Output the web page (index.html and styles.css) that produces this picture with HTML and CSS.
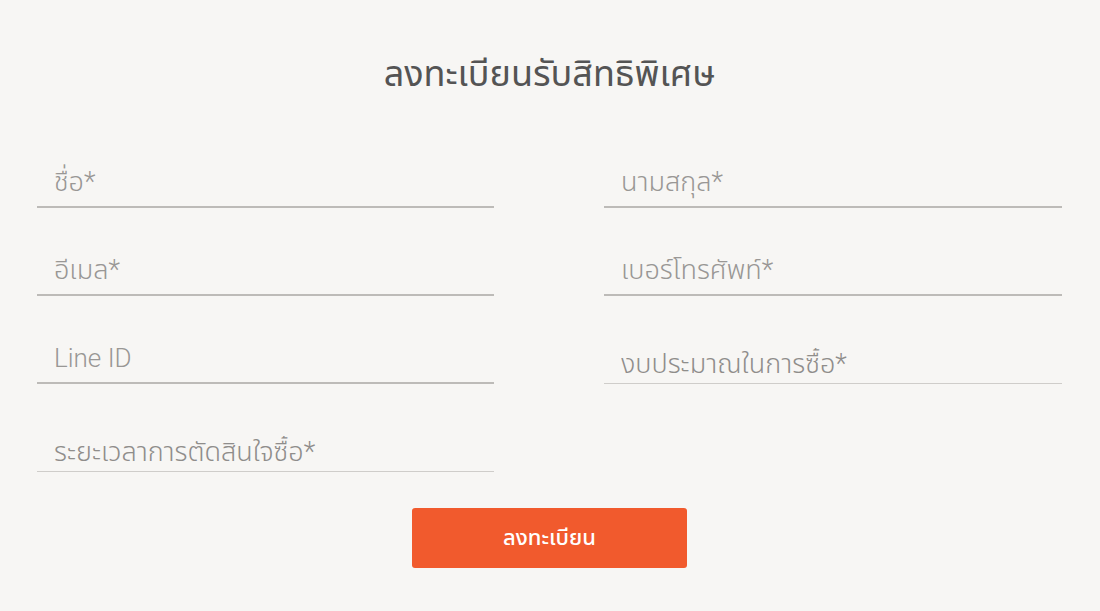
FILE: index.html
```html
<!DOCTYPE html>
<html lang="th">
<head>
<meta charset="utf-8">
<title>ลงทะเบียนรับสิทธิพิเศษ</title>
<link rel="stylesheet" href="styles.css">
</head>
<body>
<main class="page">
  <h1 class="title">ลงทะเบียนรับสิทธิพิเศษ</h1>
  <form class="form">
    <div class="grid">
      <div class="field"><input class="input" type="text" placeholder="ชื่อ*"></div>
      <div class="field"><input class="input" type="text" placeholder="นามสกุล*"></div>
      <div class="field"><input class="input" type="email" placeholder="อีเมล*"></div>
      <div class="field"><input class="input" type="tel" placeholder="เบอร์โทรศัพท์*"></div>
      <div class="field"><input class="input input-latin" type="text" placeholder="Line ID"></div>
      <div class="field"><select class="select"><option>งบประมาณในการซื้อ*</option></select></div>
      <div class="field"><select class="select"><option>ระยะเวลาการตัดสินใจซื้อ*</option></select></div>
    </div>
    <div class="actions">
      <button class="button" type="button">ลงทะเบียน</button>
    </div>
  </form>
</main>
</body>
</html>
```
FILE: styles.css
```css
* { box-sizing: border-box; }
html, body { margin: 0; padding: 0; }
body {
  background: #f7f6f4;
  font-family: "Noto Sans Thai", "Noto Sans", sans-serif;
  color: #555;
  width: 1100px;
  height: 611px;
  overflow: hidden;
}
.page {
  padding: 50px 38px 0 37px;
}
.title {
  margin: 0;
  text-align: center;
  font-weight: 400;
  font-size: 36px;
  line-height: 50px;
  color: #545454;
}
.form { margin-top: 48px; }
.grid {
  display: grid;
  grid-template-columns: 457px 458px;
  column-gap: 110px;
  row-gap: 28px;
}
.field { height: 60px; }
.input, .select {
  width: 100%;
  height: 60px;
  border: 0;
  background: transparent;
  font-family: Roboto, "Noto Sans Thai", sans-serif;
  font-size: 27px;
  font-weight: 300;
  color: #8f8d8b;
  padding: 0 0 0 17px;
  outline: none;
  border-radius: 0;
}
.input {
  border-bottom: 2px solid #bdbbb8;
  padding-top: 10px;
}
.input-latin { font-size: 26px; }
.input::placeholder { color: #999795; }
.select {
  -webkit-appearance: none;
  appearance: none;
  border-bottom: 1px solid #cfcdca;
  padding-top: 20px;
}
.actions {
  display: flex;
  justify-content: center;
  margin-top: 36px;
}
.button {
  width: 275px;
  height: 60px;
  border: 0;
  border-radius: 3px;
  background: #f15a2d;
  color: #fff;
  font-family: inherit;
  font-size: 22px;
  font-weight: 500;
}
```
